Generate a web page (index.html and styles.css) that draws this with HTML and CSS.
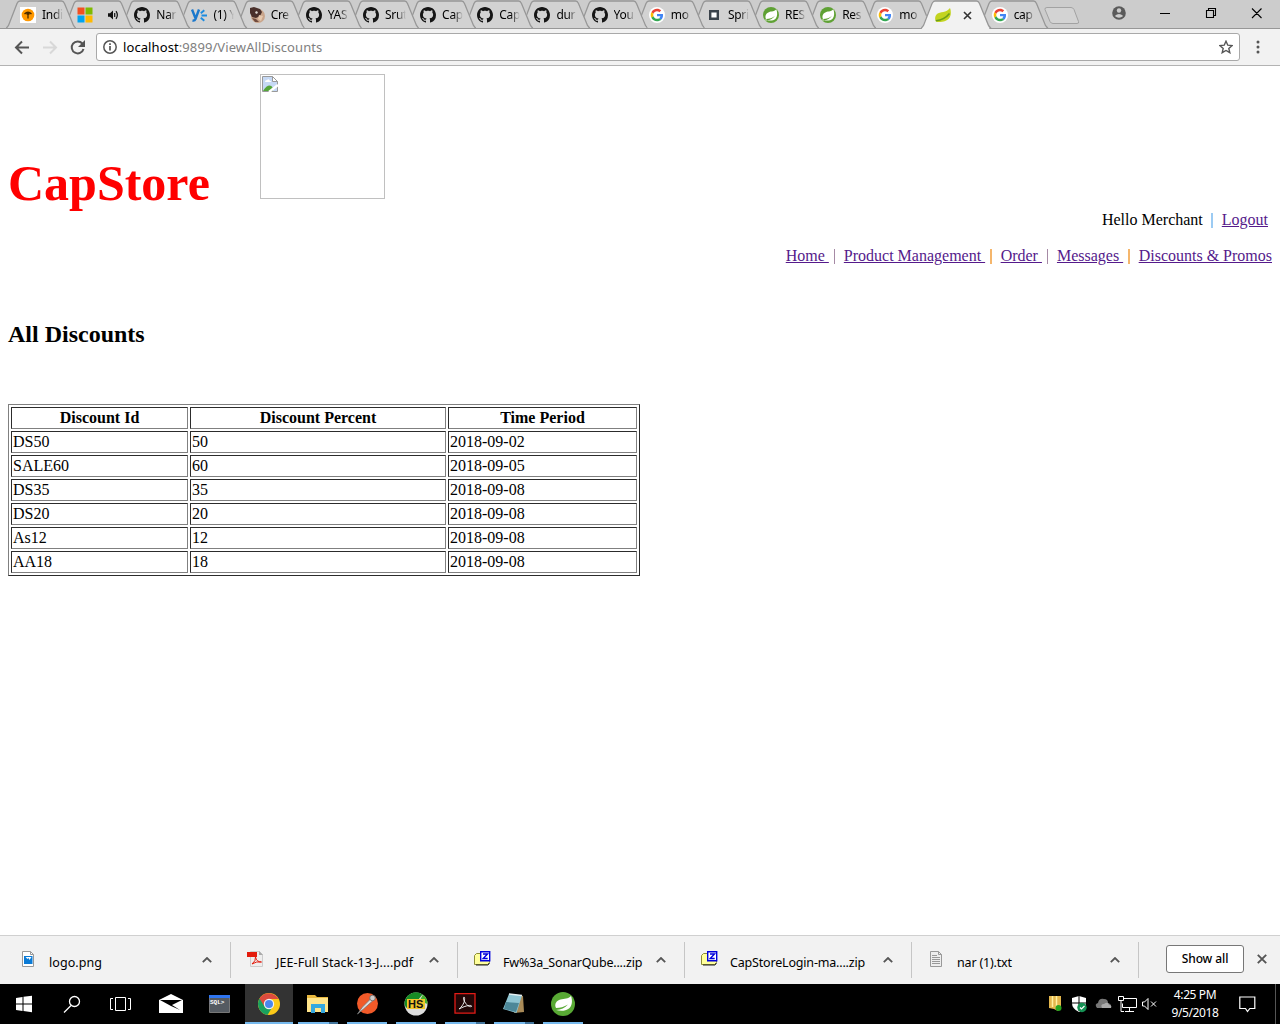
FILE: index.html
```html
<!DOCTYPE html>
<html lang="en">
<head>
<meta charset="utf-8">
<title>All Discounts</title>
<link rel="stylesheet" href="styles.css">
</head>
<body>
<svg class="defs" width="0" height="0" aria-hidden="true">
  <symbol id="tab" viewBox="0 0 71 29"><path d="M0 28.500 2.500 25.500 11 3.500Q12 1 14 1H55.500Q57.500 1 58.500 3.500L67.500 25.500 70 28.500" stroke="#979797" stroke-width="1.300"/></symbol>
  <symbol id="github" viewBox="0 0 16 16"><path fill="#151515" d="M8 0C3.580 0 0 3.580 0 8c0 3.540 2.290 6.530 5.470 7.590.4.070.55-.17.55-.38 0-.19-.01-.82-.01-1.490-2.010.37-2.530-.49-2.690-.94-.09-.23-.48-.94-.82-1.130-.28-.15-.68-.52-.01-.53.63-.01 1.080.58 1.230.82.72 1.210 1.870.87 2.330.66.07-.52.28-.87.51-1.070-1.780-.2-3.640-.89-3.640-3.950 0-.87.31-1.590.82-2.150-.08-.2-.36-1.020.08-2.120 0 0 .67-.21 2.200.82.64-.18 1.320-.27 2-.27s1.360.09 2 .27c1.530-1.040 2.200-.82 2.200-.82.44 1.100.16 1.920.08 2.120.51.56.82 1.270.82 2.150 0 3.070-1.870 3.750-3.650 3.950.29.25.54.73.54 1.480 0 1.070-.01 1.930-.01 2.200 0 .21.15.46.55.38A8.010 8.010 0 0 0 16 8c0-4.420-3.580-8-8-8z"/></symbol>
  <symbol id="google" viewBox="0 0 16 16"><circle cx="8" cy="8" r="8" fill="#fff"/><g transform="translate(1.700 1.700) scale(.2625)"><path fill="#EA4335" d="M24 9.500c3.540 0 6.710 1.220 9.210 3.600l6.850-6.850C35.900 2.380 30.470 0 24 0 14.620 0 6.510 5.380 2.560 13.220l7.980 6.190C12.430 13.720 17.740 9.500 24 9.500z"/><path fill="#4285F4" d="M46.980 24.550c0-1.570-.15-3.090-.38-4.550H24v9.020h12.940c-.58 2.960-2.260 5.480-4.780 7.180l7.730 6c4.510-4.180 7.090-10.360 7.090-17.650z"/><path fill="#FBBC05" d="M10.530 28.590c-.48-1.450-.76-2.990-.76-4.590s.27-3.140.76-4.590l-7.980-6.190C.92 16.460 0 20.120 0 24s.92 7.540 2.560 10.780z"/><path fill="#34A853" d="M24 48c6.480 0 11.930-2.130 15.890-5.810l-7.730-6c-2.150 1.450-4.920 2.300-8.160 2.300-6.260 0-11.570-4.220-13.470-9.910l-7.980 6.190C6.510 42.620 14.620 48 24 48z"/></g></symbol>
  <symbol id="spring" viewBox="0 0 24 24"><circle cx="12" cy="12" r="12" fill="#5fa134"/><path fill="#fff" d="M20 3.500c1.800 5 1.800 10.500-.8 13.600-3 3.500-8.500 3.800-13.700 2.900 5-.7 10-2.700 12.500-7-3.600 3.200-8.500 4.600-13.500 5.100C2.500 13.500 4.500 9 8.800 7.700 13 6.500 17.400 7.200 20 3.500z"/><circle cx="4.500" cy="19.500" r="1" fill="#fff"/></symbol>
  <symbol id="chev" viewBox="0 0 10 6"><path d="M.8 5.200 5 1l4.200 4.200" stroke="#555" stroke-width="1.800"/></symbol>
  <symbol id="zip" viewBox="0 0 17 16"><path fill="#ffff9c" stroke="#8c8c35" d="M.5 4.500 2.500 2.500H7l2 2h6.500v7l-2 2H.5z"/><path d="M2 14h12l1.500-2" stroke="#222"/><path fill="#fff" stroke="#0000dc" stroke-width="1.400" d="M6.700.7h9v9h-9z"/><path d="M9 3h4.500L9.200 7.500h4.500" stroke="#0000dc" stroke-width="1.400"/></symbol>
</svg>

<header class="tabs">
  <div class="tab"><svg class="shape"><use href="#tab"/></svg><svg class="fav" viewBox="0 0 16 16"><path fill="#fff" d="M0 0h16v16H0z"/><circle cx="8" cy="8" r="6.300" fill="#ff9800"/><path d="M4.500 7Q8 3.500 11.500 7M8 6v5.500M6.500 7h3" stroke="#4a2b00" stroke-width="1.300"/></svg><span class="label">Indi</span></div>
  <div class="tab"><svg class="shape"><use href="#tab"/></svg><svg class="fav" viewBox="0 0 16 16"><path fill="#f25022" d="M.5.5h7v7h-7z"/><path fill="#7fba00" d="M8.500.5h7v7h-7z"/><path fill="#00a4ef" d="M.5 8.500h7v7h-7z"/><path fill="#ffb900" d="M8.500 8.500h7v7h-7z"/></svg><svg class="sound" viewBox="0 0 12 10"><path fill="#111" d="M0 3.300h2L5 .5v9L2 6.700H0z"/><path d="M6.700 3v4M8 1.200q2.700 3.800 0 7.600" stroke="#111" stroke-width="1.200"/></svg></div>
  <div class="tab"><svg class="shape"><use href="#tab"/></svg><svg class="fav"><use href="#github"/></svg><span class="label">Nar</span></div>
  <div class="tab"><svg class="shape"><use href="#tab"/></svg><svg class="fav" viewBox="0 0 16 16"><path d="m1 2.500 3.400 8.500M8 2.500 4.500 12q-.8 2-3 1.500" stroke="#1b78cc" stroke-width="2.400"/><path d="m9.800 6.300 3.500-3M10.500 8.500H16M9.800 10.700l3.500 3" stroke="#1b8be0" stroke-width="1.900"/></svg><span class="label">(1) Y</span></div>
  <div class="tab"><svg class="shape"><use href="#tab"/></svg><svg class="fav" viewBox="0 0 16 16"><circle cx="9" cy="9" r="7" fill="#c9a58b"/><path fill="#4a302b" d="M1 1 5 0l6 2 2 3-2 4-4 2-4-1-2-4z"/><path fill="#ded8d2" d="m7 4 2 1-1 2-2-1z"/><path fill="#704b3e" d="m3 11 4 1 3 3H6z"/><path fill="#e6c8ad" d="m10 8 4 1-2 5-3-2z"/></svg><span class="label">Cre</span></div>
  <div class="tab"><svg class="shape"><use href="#tab"/></svg><svg class="fav"><use href="#github"/></svg><span class="label">YAS</span></div>
  <div class="tab"><svg class="shape"><use href="#tab"/></svg><svg class="fav"><use href="#github"/></svg><span class="label">Srut</span></div>
  <div class="tab"><svg class="shape"><use href="#tab"/></svg><svg class="fav"><use href="#github"/></svg><span class="label">Cap</span></div>
  <div class="tab"><svg class="shape"><use href="#tab"/></svg><svg class="fav"><use href="#github"/></svg><span class="label">Cap</span></div>
  <div class="tab"><svg class="shape"><use href="#tab"/></svg><svg class="fav"><use href="#github"/></svg><span class="label">dur</span></div>
  <div class="tab"><svg class="shape"><use href="#tab"/></svg><svg class="fav"><use href="#github"/></svg><span class="label">You</span></div>
  <div class="tab"><svg class="shape"><use href="#tab"/></svg><svg class="fav"><use href="#google"/></svg><span class="label">mo</span></div>
  <div class="tab"><svg class="shape"><use href="#tab"/></svg><svg class="fav" viewBox="0 0 16 16"><path fill="#fff" stroke="#3b434b" stroke-width="2.400" d="M4.200 4.200h7.600v7.600H4.200z"/></svg><span class="label">Spri</span></div>
  <div class="tab"><svg class="shape"><use href="#tab"/></svg><svg class="fav"><use href="#spring"/></svg><span class="label">RES</span></div>
  <div class="tab"><svg class="shape"><use href="#tab"/></svg><svg class="fav"><use href="#spring"/></svg><span class="label">Res</span></div>
  <div class="tab"><svg class="shape"><use href="#tab"/></svg><svg class="fav"><use href="#google"/></svg><span class="label">mo</span></div>
  <div class="tab active"><svg class="shape"><use href="#tab"/></svg><svg class="fav" viewBox="0 0 16 16"><path fill="#c3d420" d="M15 1c1.300 3 1.200 8-1 10.500-2.500 3-7.500 3.500-12 3.500-2.500-1-2.500-6 0-8C5 4.500 11.500 6 15 1z"/><path d="M.8 13.800Q9.500 12.800 14.500 6.500" stroke="#6d9f18" stroke-width="1.600"/></svg><svg class="shut" viewBox="0 0 9 9"><path d="m1 1 7 7M8 1 1 8" stroke="#333" stroke-width="1.600"/></svg></div>
  <div class="tab"><svg class="shape"><use href="#tab"/></svg><svg class="fav"><use href="#google"/></svg><span class="label">cap</span></div>
  <svg class="newtab" viewBox="0 0 36 18"><path fill="#d3d3d3" stroke="#a2a2a2" d="M3 .5h24q2 0 3 2l4.500 12q.8 2-1.500 2H9q-2 0-3-2L1 2.500Q.5.500 3 .5z"/></svg>
  <svg class="winbtns" viewBox="0 0 155 28"><circle cx="8" cy="13" r="6.800" fill="#5a5a5a"/><circle cx="8" cy="10.500" r="2.200" fill="#ccc"/><path fill="#ccc" d="M3.800 16q4.200-4 8.400 0-4.200 3.500-8.400 0z"/><path d="M49 13.500h10M95.500 10.500h7v7h-7zM97.500 10.500v-2h7v7h-2M141 8.500l9.500 9.500M150.500 8.500 141 18" stroke="#000" stroke-width="1.100"/></svg>
</header>

<nav class="toolbar">
  <svg class="navbtns" viewBox="0 0 88 37"><path d="M29 18.500H16M22 12.500l-6 6 6 6" stroke="#555" stroke-width="2"/><path d="M43 18.500h13M50 12.500l6 6-6 6" stroke="#d8d8d8" stroke-width="2"/><path d="M82.300 14.500A6 6 0 1 0 83.500 20" stroke="#555" stroke-width="2"/><path fill="#555" d="M85 11v7h-7z"/></svg>
  <div class="address">
    <svg class="info" viewBox="0 0 14 14"><circle cx="7" cy="7" r="6.200" stroke="#555" stroke-width="1.500"/><path d="M7 6v4.500M7 3.300v1.600" stroke="#555" stroke-width="1.700"/></svg>
    <span class="url"><b>localhost</b>:9899/ViewAllDiscounts</span>
    <svg class="star" viewBox="0 0 14 14"><path d="m7 1.200 1.800 4 4.300.4-3.300 2.900 1 4.200L7 10.500l-3.800 2.200 1-4.200L.9 5.600l4.300-.4z" stroke="#555" stroke-width="1.400"/></svg>
  </div>
  <svg class="dots" viewBox="0 0 4 14"><g fill="#555"><circle cx="2" cy="2" r="1.500"/><circle cx="2" cy="7" r="1.500"/><circle cx="2" cy="12" r="1.500"/></g></svg>
</nav>

<main class="page">
  <div class="brand">
    <h1>CapStore</h1>
    <div class="missing"><svg viewBox="0 0 16 16"><path fill="#c6d9f5" stroke="#999" d="M.5.5h10l5 5v10H.5z"/><path fill="#fff" stroke="#999" d="M10.500.5v5h5z"/><path fill="#fff" d="M3 6q0-2 2-2 2-2 3 1 2 0 1 1z"/><path fill="#55a63a" d="M1 15q6-9 10-3v3z"/><path d="m7 16 9-7" stroke="#fff" stroke-width="2.500"/></svg></div>
  </div>
  <div class="user">Hello Merchant<i class="bar blue"></i><a href="#">Logout</a></div>
  <div class="menu"><a href="#">Home </a><i class="bar mauve"></i><a href="#">Product Management </a><i class="bar orange"></i><a href="#">Order </a><i class="bar mauve"></i><a href="#">Messages </a><i class="bar orange"></i><a href="#">Discounts &amp; Promos</a></div>
  <h2>All Discounts</h2>
  <table>
    <colgroup><col class="c1"><col class="c2"><col class="c3"></colgroup>
    <tr><th>Discount Id</th><th>Discount Percent</th><th>Time Period</th></tr>
    <tr><td>DS50</td><td>50</td><td>2018-09-02</td></tr>
    <tr><td>SALE60</td><td>60</td><td>2018-09-05</td></tr>
    <tr><td>DS35</td><td>35</td><td>2018-09-08</td></tr>
    <tr><td>DS20</td><td>20</td><td>2018-09-08</td></tr>
    <tr><td>As12</td><td>12</td><td>2018-09-08</td></tr>
    <tr><td>AA18</td><td>18</td><td>2018-09-08</td></tr>
  </table>
</main>

<section class="downloads">
  <div class="item"><svg class="file" viewBox="0 0 17 16"><path fill="#fff" stroke="#999" d="M2.500.5h8l3 3v12h-11z"/><path d="M10.500.5v3h3" stroke="#999"/><path fill="#0b7bd6" d="M4 5h8.500v8H4z"/><path fill="#fff" d="m5.500 6 2 2 1-1 1 2 2-3z"/></svg><span class="loose">logo.png</span><svg class="chev"><use href="#chev"/></svg></div>
  <div class="item"><svg class="file" viewBox="0 0 17 16"><path fill="#eee" stroke="#ccc" d="M3.500.5h9l3 3v12h-12z"/><path fill="#aaa" d="M12 0v4h4z"/><path fill="#e31b0c" d="M0 1h10v5H0z"/><path d="M5 13q4-3 3.500-7 1 5 6 5-5-1-9.500 2z" stroke="#e31b0c"/></svg><span class="loose">JEE-Full Stack-13-J....pdf</span><svg class="chev"><use href="#chev"/></svg></div>
  <div class="item"><svg class="file"><use href="#zip"/></svg><span class="tight">Fw%3a_SonarQube....zip</span><svg class="chev"><use href="#chev"/></svg></div>
  <div class="item"><svg class="file"><use href="#zip"/></svg><span class="tight">CapStoreLogin-ma....zip</span><svg class="chev"><use href="#chev"/></svg></div>
  <div class="item"><svg class="file" viewBox="0 0 17 16"><path fill="#eee" stroke="#999" d="M2.500.5h8l3 3v12h-11z"/><path d="M10.500.5v3h3M4 4.500h5M4 6.500h8M4 8.500h8M4 10.500h8M4 12.500h8" stroke="#999"/></svg><span class="tight">nar (1).txt</span><svg class="chev"><use href="#chev"/></svg></div>
  <button class="showall">Show all</button>
  <svg class="dismiss" viewBox="0 0 10 10"><path d="m.8.800 8.400 8.400M9.200.8.800 9.200" stroke="#555" stroke-width="1.900"/></svg>
</section>

<footer class="taskbar">
  <div class="app"><svg viewBox="0 0 48 40"><path fill="#fff" d="m16 14 6.500-1v6.500H16zM23.500 12.800 32 11.700v7.800h-8.500zM16 20.500h6.500V27L16 26zM23.500 20.500H32v7.800l-8.500-1.200z"/></svg></div>
  <div class="app"><svg viewBox="0 0 48 40"><circle cx="25.500" cy="17.500" r="5" stroke="#fff" stroke-width="1.300"/><path d="m22 21.500-7 7" stroke="#fff" stroke-width="1.300"/></svg></div>
  <div class="app"><svg viewBox="0 0 48 40"><path d="M17.500 13.500h10v13h-10zM15 14.500h-2.500v11H15M30 14.500h2.500v11H30" stroke="#fff"/></svg></div>
  <div class="app"><svg viewBox="0 0 48 40"><path fill="#fff" d="m12 16 12-6 12 6v13H12z"/><path fill="#000" d="M13 16h22l-10 5 8 5-9-4z"/></svg></div>
  <div class="app"><svg viewBox="0 0 48 40"><path fill="#555b62" stroke="#777" d="M13.500 12.500h20v16h-20z"/><path fill="#2f75f0" d="M13 11h21v3H13z"/><text class="sql" x="14" y="20">SQL&gt;</text></svg></div>
  <div class="app current"><svg viewBox="0 0 48 40"><circle cx="24" cy="20" r="11" fill="#fbc918"/><path fill="#19a15f" d="M14.500 14.500A11 11 0 0 0 22.500 30.900L28 22z"/><path fill="#dd4b3e" d="m14.500 14.500 5 8L24 15h9.500A11 11 0 0 0 14.500 14.500z"/><circle cx="24" cy="20" r="5.200" fill="#f3f3f3"/><circle cx="24" cy="20" r="4" fill="#4a87ee"/></svg></div>
  <div class="app open many"><svg viewBox="0 0 48 40"><path fill="#e8b83e" d="M13 11h8l2 2h11v14H13z"/><path fill="#ffe48a" d="M13 14h21v14H13z"/><path fill="#35a8e0" d="M17 20h14v9h-4v-5h-6v5h-4z"/></svg></div>
  <div class="app open"><svg viewBox="0 0 48 40"><circle cx="24.500" cy="19.500" r="10.500" fill="#f15a29"/><path d="m14.500 30 5-7 8-8 2 2-9 8z" fill="#ddd" stroke="#777" stroke-width=".8"/><circle cx="29.500" cy="14" r="2.800" fill="#ccc" stroke="#666" stroke-width=".8"/></svg></div>
  <div class="app open"><svg viewBox="0 0 48 40"><circle cx="24" cy="20" r="11.500" fill="#ddd"/><path fill="#168b25" d="M12.500 20a11.500 11.500 0 0 1 18-9.500L26 16l-12 8z"/><path fill="#46b12d" d="M31 10.500A11.500 11.500 0 0 1 35.500 20l-8-3z"/><path fill="#f2c72c" d="M15 15h18v10H15z"/><text class="hs" x="16" y="24">HS</text></svg></div>
  <div class="app open many"><svg viewBox="0 0 48 40"><path fill="#210606" stroke="#e11b16" stroke-width="1.300" d="M14 9.600h20v19.500H14z"/><path d="M18 25c5-4 6-9 5.500-11.500-1-1-1.500.5-.5 3 2 4 5 7 7.500 6 1-1.500-4-2-12.500 2.500z" stroke="#eee"/></svg></div>
  <div class="app open many"><svg viewBox="0 0 48 40"><path fill="#a98a57" d="m29 11 4 1 1 16-10 1z"/><path fill="#8ec4d2" d="m19 10 13 1.500L26.500 29 13 25z"/><path fill="#4c8798" d="m16 18 13 1-3 9-12-3z"/><path d="m19 10 13 1.500" stroke="#e3eff2" stroke-width="1.500"/></svg></div>
  <div class="app open"><svg viewBox="0 0 48 40"><circle cx="24" cy="20" r="12" fill="#58a934"/><path fill="#fff" d="M32 12c1.800 5 1 10-2 12.500-4 3-9 2.500-13 1.500 5-.5 9-2 12-5.500-4 2.500-8 3.500-12 3.500-2-4 .5-7.500 4.500-8.500S29 15 32 12z"/></svg></div>
  <svg class="tray" viewBox="0 0 114 40"><path fill="#e3b64c" d="M1 12h12v12l-3 3-4-2-5-1z"/><path d="M4.500 12v11M8.500 12v12" stroke="#fff0a0" stroke-width="1.500"/><circle cx="10.500" cy="24" r="3" fill="#27a420"/><path fill="#fff" d="m31 12 7 2v5q0 6-7 9-7-3-7-9v-5z"/><path d="M31 12v15M24 19h14" stroke="#000"/><circle cx="34" cy="23.500" r="4.700" fill="#159154"/><path d="m32 23.500 1.500 1.500 3-3" stroke="#fff" stroke-width="1.200"/><path fill="#777" d="M49 24q-3-4 1-5 1-5 6-4 4 0 4 4 4 1 3 5z"/><path fill="#aaa" d="M54 24q-2-4 2-4 4-3 5 1 3 0 2 3z"/><path d="M76 14.500h12.500v9H74.500v-4M81.500 24v3M77 27.500h9M70.500 12.500h5v4h-5zM73 17v10.500h3" stroke="#fff"/><path d="M94.500 18h2l3.500-3.500v11L96.500 22h-2zM103 17.500l5 5M108 17.500l-5 5" stroke="#fff"/></svg>
  <div class="clock"><span>4:25 PM</span><span>9/5/2018</span></div>
  <svg class="notice" viewBox="0 0 17 17"><path d="M.8 1h15v11.500h-5L8.500 15.500l-2-3H.8z" stroke="#fff" stroke-width="1.200"/></svg>
</footer>
</body>
</html>
```
FILE: styles.css
```css
* { box-sizing: border-box; }
body { margin: 0; width: 1280px; height: 1024px; overflow: hidden; display: flex; flex-direction: column; background: #fff; color: #000; font-family: "Noto Sans", "Open Sans", sans-serif; }
svg { fill: none; flex: none; display: block; }
.defs { position: absolute; }

.tabs { height: 29px; padding-left: 6px; display: flex; background: linear-gradient(#ccc, #ccc) 0 0 / 100% 28px no-repeat #979797; }
.tab { flex: none; width: 71px; height: 29px; margin-right: -13.850px; display: grid; grid-template-columns: 14px 16px 6px 21px 14px; align-items: center; position: relative; isolation: isolate; }
.tab::before { content: ""; position: absolute; inset: 1px 0 1px 0; z-index: -1; background: #d2d2d2; clip-path: polygon(7px 50%, 12px 0, 58px 0, 70px 100%, 13px 100%); }
.tab:first-child::before { clip-path: polygon(1px 100%, 12px 0, 58px 0, 70px 100%); }
.tab > * { grid-row: 1; }
.tab:not(:first-child) .shape { clip-path: polygon(6px 15px, 6px 0, 71px 0, 71px 29px, 12px 29px); }
.shape { grid-column: 1 / -1; width: 71px; height: 29px; }
.fav { grid-column: 2; width: 16px; height: 16px; margin-top: 1px; }
.label { grid-column: 4; overflow: hidden; white-space: nowrap; font-size: 12px; line-height: 18px; letter-spacing: -.3px; mask-image: linear-gradient(90deg, #000 55%, transparent); }
.sound { grid-column: 4; width: 12px; height: 10px; margin-left: 9px; }
.shut { grid-column: 4; width: 9px; height: 9px; margin-left: 6px; margin-top: 1px; }
.tab.active { z-index: 2; }
.tab.active::before { background: #f2f2f2; bottom: 0; clip-path: polygon(1px 100%, 12px 0, 58px 0, 69px 100%); }
.tab.active .shape { clip-path: none; }
.newtab { width: 36px; height: 18px; margin: 7px 0 0 9px; }
.winbtns { width: 155px; height: 28px; margin-left: auto; margin-right: 14px; }

.toolbar { height: 37px; display: flex; align-items: center; background: #f2f2f2; border-bottom: 1px solid #b3b3b3; }
.navbtns { width: 88px; height: 37px; }
.address { width: 1144px; height: 28px; margin-left: 8px; padding: 0 6px; display: flex; align-items: center; gap: 6px; background: #fff; border: 1px solid #a9a9a9; border-radius: 3px; }
.info { width: 14px; height: 14px; }
.url { flex: 1; font-size: 13px; line-height: 18px; color: #808080; letter-spacing: .09px; }
.url b { font-weight: 400; color: #000; }
.star { width: 14px; height: 14px; }
.dots { width: 4px; height: 14px; margin-left: 16px; }

.page { height: 869px; padding: 8px; font-family: "Liberation Serif", serif; font-size: 16px; line-height: 18px; }
.brand { height: 137px; display: flex; align-items: flex-start; }
h1 { width: 252px; margin: 81px 0 0; font-size: 50px; line-height: 56px; color: #f00; }
.missing { width: 125px; height: 125px; padding: 1px; border: 1px solid #c0c0c0; }
.missing svg { width: 16px; height: 16px; }
.user, .menu { display: flex; justify-content: flex-end; white-space: pre; }
.user { padding-right: 4px; }
.menu { margin-top: 18px; }
a { color: #551a8b; text-decoration: underline; }
.bar { width: 1px; height: 15px; margin: 2px 9px 0 5px; }
.blue { width: 2px; margin: 2px 9px 0 8px; background: #9ccbf3; }
.mauve { background: #a68aa5; }
.orange { width: 2px; margin: 2px 8.500px 0 5px; background: #f5b66c; }
h2 { margin: 56px 0; font-size: 24px; line-height: 27px; }
table { width: 632px; table-layout: fixed; border: 1px solid; border-color: #808080 #2c2c2c #2c2c2c #808080; border-spacing: 2px; }
.c1 { width: 177px; } .c2 { width: 256px; } .c3 { width: 189px; }
th, td { padding: 1px; height: 22px; border: 1px solid; border-color: #2c2c2c #808080 #808080 #2c2c2c; }

.downloads { height: 49px; padding-left: 4px; display: flex; align-items: center; background: #f2f2f2; border-top: 1px solid #d0d0d0; }
.item { flex: none; width: 227px; height: 36px; display: grid; grid-template-columns: 16px 17px 12px 153px 10px; align-items: center; border-right: 1px solid #c6c6c6; }
.file { grid-column: 2; width: 17px; height: 16px; margin-top: -3px; }
.item span { grid-column: 4; white-space: nowrap; font-size: 12.500px; line-height: 20px; padding-top: 5px; }
.item .loose { letter-spacing: .08px; }
.item .loose:not(:has(+ .none)) { font-size: 12.500px; }
.item .tight { letter-spacing: -.18px; }
.chev { grid-column: 5; width: 10px; height: 6px; }
.showall { width: 78px; height: 28px; margin: -2px 0 0 27px; padding: 0 0 2px; border: 1px solid #777; border-radius: 3px; background: #fff; color: #000; font: 500 12px "Noto Sans", sans-serif; letter-spacing: -.1px; }
.dismiss { width: 10px; height: 10px; margin: -2px 0 0 13px; }

.taskbar { height: 40px; display: flex; background: #000; }
.app { flex: none; width: 48px; height: 40px; margin-right: 1px; background-repeat: no-repeat; }
.app svg { width: 48px; height: 40px; }
.current { background: linear-gradient(transparent 38px, #76b9ed 38px) #333; }
.open { background: linear-gradient(#76b9ed, #76b9ed) 4px 38px / 40px 2px no-repeat; }
.open.many { background: linear-gradient(90deg, #76b9ed 31px, #42749b 31px) 4px 38px / 40px 2px no-repeat; }
.sql { fill: #fff; font: bold 6px "Liberation Mono", monospace; }
.hs { fill: #111; font: bold 11px "Liberation Sans", sans-serif; }
.tray { width: 114px; height: 40px; margin-left: auto; }
.clock { width: 62px; margin-left: 2px; padding-top: 2px; display: flex; flex-direction: column; align-items: center; color: #fff; font-size: 12px; line-height: 18px; letter-spacing: -.4px; }
.notice { width: 17px; height: 17px; margin: 12px 19px 0 13px; }
.taskbar::after { content: ""; width: 1px; margin-right: 4px; background: #555; }
```
